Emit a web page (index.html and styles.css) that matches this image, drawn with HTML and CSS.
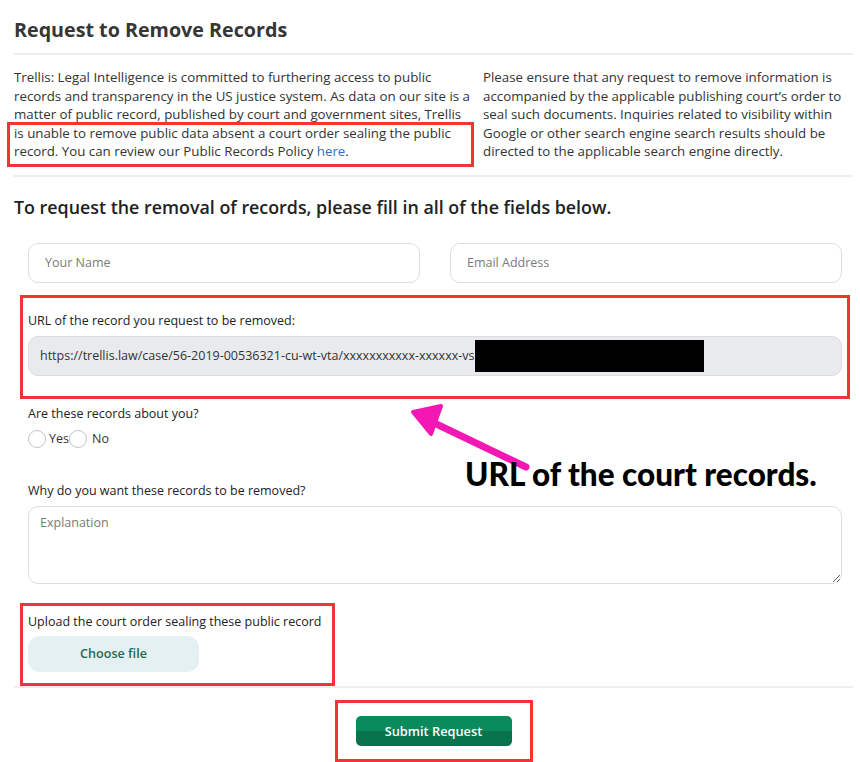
FILE: index.html
```html
<!DOCTYPE html>
<html lang="en">
<head>
  <meta charset="UTF-8">
  <meta name="viewport" content="width=device-width, initial-scale=1.0">
  <title>Request to Remove Records</title>
  <link rel="stylesheet" href="styles.css">
</head>
<body>
<div class="sheet">
  <h1 class="title">Request to Remove Records</h1>

  <div class="intro">
    <p>Trellis: Legal Intelligence is committed to furthering access to public records and transparency in the US justice system. As data on our site is a matter of public record, published by court and government sites, Trellis is unable to remove public data absent a court order sealing the public record. You can review our Public Records Policy <a href="#">here</a>.</p>
    <p>Please ensure that any request to remove information is accompanied by the applicable publishing court’s order to seal such documents. Inquiries related to visibility within Google or other search engine search results should be directed to the applicable search engine directly.</p>
  </div>

  <h2 class="subtitle">To request the removal of records, please fill in all of the fields below.</h2>

  <form class="removal-form">
    <div class="row-two">
      <input type="text" class="field" placeholder="Your Name">
      <input type="email" class="field" placeholder="Email Address">
    </div>

    <div class="form-group">
      <label for="record-url">URL of the record you request to be removed:</label>
      <input type="text" id="record-url" class="field field-readonly" value="https://trellis.law/case/56-2019-00536321-cu-wt-vta/xxxxxxxxxxx-xxxxxx-vs-" readonly>
    </div>

    <div class="form-group">
      <label>Are these records about you?</label>
      <div class="radios">
        <span class="radio"></span><span class="radio-text">Yes</span>
        <span class="radio"></span><span class="radio-text radio-last">No</span>
      </div>
    </div>

    <div class="form-group group-why">
      <label for="why">Why do you want these records to be removed?</label>
      <textarea id="why" class="field field-area" placeholder="Explanation"></textarea>
    </div>

    <div class="form-group">
      <label>Upload the court order sealing these public record</label>
      <button type="button" class="file-button">Choose file</button>
    </div>

    <div class="submit-row">
      <button type="button" class="submit-button">Submit Request</button>
    </div>
  </form>

  <!-- annotations drawn on top of the screenshot -->
  <div class="mark mark-policy"></div>
  <div class="mark mark-url"></div>
  <div class="mark mark-upload"></div>
  <div class="mark mark-submit"></div>
  <div class="redact"></div>
  <svg class="arrow" width="140" height="75" viewBox="400 400 140 75">
    <line x1="526" y1="467" x2="428" y2="420" stroke="#f317b4" stroke-width="7" stroke-linecap="round"/>
    <polygon points="413,412 441,406 431,434" fill="#f317b4" stroke="#f317b4" stroke-width="4" stroke-linejoin="round"/>
  </svg>
  <div class="note">URL of the court records.</div>
</div>
</body>
</html>
```

FILE: styles.css
```css
body {
  margin: 0;
  background: #ffffff;
  font-family: "Open Sans", Arial, sans-serif;
  color: #333333;
}

.sheet {
  position: relative;
  width: 860px;
  height: 762px;
  overflow: hidden;
  padding: 0 7px 0 14px;
  box-sizing: border-box;
}

.title {
  margin: 0;
  padding-top: 17px;
  padding-bottom: 10px;
  font-size: 19.7px;
  line-height: 26px;
  font-weight: 700;
  color: #363636;
  border-bottom: 2px solid #eeeeee;
}

.intro {
  display: grid;
  grid-template-columns: 457px 1fr;
  column-gap: 12px;
  padding: 13px 0 14px;
  border-bottom: 2px solid #eeeeee;
}

.intro p {
  margin: 0;
  font-size: 13.3px;
  line-height: 18.5px;
  color: #333333;
}

.intro a {
  color: #2f6fbf;
  text-decoration: none;
}

.subtitle {
  margin: 0;
  padding-top: 18px;
  font-size: 17.85px;
  line-height: 25px;
  font-weight: 600;
  color: #222222;
}

.removal-form {
  padding: 23px 0 0;
}

.row-two {
  display: grid;
  grid-template-columns: 1fr 1fr;
  column-gap: 30px;
  padding: 0 11px 0 14px;
}

.field {
  display: block;
  width: 100%;
  height: 40px;
  box-sizing: border-box;
  border: 1px solid #dddddd;
  border-radius: 10px;
  padding: 0 16px;
  font-family: "Open Sans", Arial, sans-serif;
  font-size: 12.5px;
  color: #333333;
  background: #ffffff;
  outline: none;
}

.field::placeholder {
  color: #7a7a7a;
}

.field-readonly {
  background: #e9eaed;
  padding: 0 11px;
}

.field-area {
  height: 78px;
  padding: 7px 11px;
  resize: vertical;
}

.form-group {
  padding: 29px 11px 0 14px;
}

.form-group label {
  display: block;
  font-size: 12.5px;
  line-height: 18px;
  color: #222222;
  margin-bottom: 6px;
}

.group-why {
  padding-top: 33px;
}

.radios {
  display: flex;
  align-items: center;
  height: 20px;
  font-size: 12.5px;
  color: #333333;
}

.radio {
  width: 16px;
  height: 16px;
  border: 1px solid #c4c4c4;
  border-radius: 50%;
  background: #ffffff;
}

.radio-text {
  margin-left: 3px;
}

.radio-last {
  margin-left: 5px;
}

.file-button {
  display: block;
  width: 171px;
  height: 36px;
  border: none;
  border-radius: 12px;
  background: #e5f0f3;
  color: #1f6b55;
  font-family: "Open Sans", Arial, sans-serif;
  font-size: 12.6px;
  font-weight: 600;
  margin-top: -1px;
}

.submit-row {
  margin-top: 14px;
  border-top: 2px solid #eeeeee;
  padding-top: 28px;
  display: flex;
  justify-content: center;
}

.submit-button {
  width: 156px;
  height: 30px;
  border: none;
  border-radius: 5px;
  background: linear-gradient(#0a8b5c 0%, #0a8b5c 50%, #07744b 50%, #07744b 100%);
  color: #ffffff;
  font-family: "Open Sans", Arial, sans-serif;
  font-size: 12.8px;
  font-weight: 600;
}

/* annotation layer */
.mark {
  position: absolute;
  border: 3px solid #f43335;
  box-sizing: border-box;
}

.mark-policy {
  left: 7px;
  top: 122px;
  width: 467px;
  height: 45px;
}

.mark-url {
  left: 20px;
  top: 295px;
  width: 830px;
  height: 104px;
}

.mark-upload {
  left: 20px;
  top: 603px;
  width: 315px;
  height: 83px;
}

.mark-submit {
  left: 335px;
  top: 700px;
  width: 198px;
  height: 62px;
}

.redact {
  position: absolute;
  left: 475px;
  top: 340px;
  width: 229px;
  height: 32px;
  background: #000000;
}

.arrow {
  position: absolute;
  left: 400px;
  top: 400px;
}

.note {
  position: absolute;
  left: 465px;
  top: 455px;
  font-family: Lato, "Open Sans", sans-serif;
  font-size: 31.5px;
  line-height: 38px;
  font-weight: 900;
  color: #000000;
  white-space: nowrap;
}
```
